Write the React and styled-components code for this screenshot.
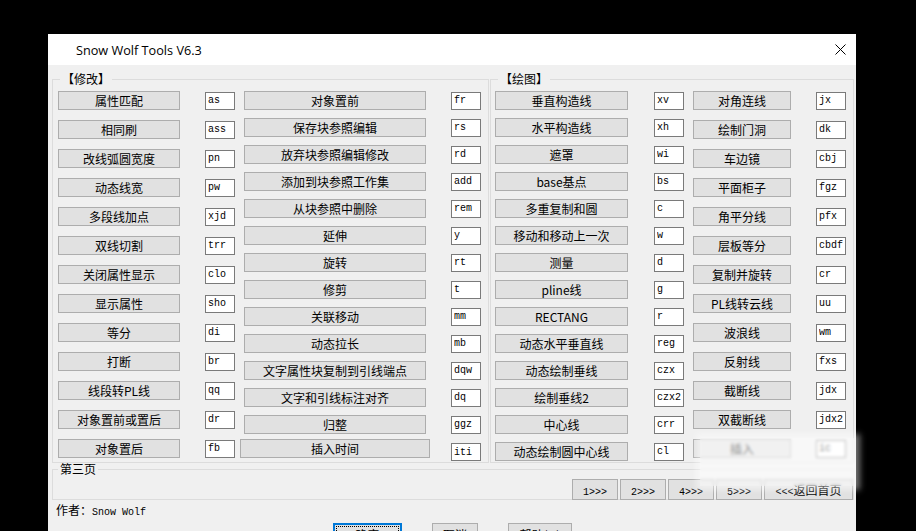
import React from 'react';
import styled, { createGlobalStyle } from 'styled-components';

const GlobalStyle = createGlobalStyle`
  html, body { margin: 0; padding: 0; background: #000; overflow: hidden; }
  * { box-sizing: border-box; }
`;

const Screen = styled.div`
  width: 916px;
  height: 531px;
  overflow: hidden;
  background: #000;
  padding: 34px 0 0 48px;
`;

const Window = styled.div`
  position: relative;
  width: 808px;
  height: 540px;
  background: #f0f0f0;
  display: flex;
  flex-direction: column;
  font-family: "Noto Sans CJK SC", "Noto Sans", sans-serif;
  font-size: 12px;
  color: #000;
`;

const TitleBar = styled.div`
  height: 31px;
  flex: none;
  background: #fff;
  display: flex;
  align-items: center;
  justify-content: space-between;
  padding: 0 10px 0 28px;
  font-family: "Open Sans", "Noto Sans", sans-serif;
  font-size: 12.7px;
`;

const CloseIcon = styled.svg`
  width: 11px;
  height: 11px;
  display: block;
`;

const GroupsRow = styled.div`
  display: flex;
  gap: 1px;
  margin: 6px 2px 0 4px;
  height: 392px;
  flex: none;
`;

const Group = styled.fieldset`
  margin: 0;
  min-width: 0;
  width: ${(p) => p.$w}px;
  height: 100%;
  border: 1px solid #dcdcdc;
  padding: 0 0 0 ${(p) => p.$padL}px;
`;

const Legend = styled.legend`
  margin-left: ${(p) => p.$ml || 0}px;
  padding: 0 2px;
  font-size: 12px;
  line-height: ${(p) => p.$lh || 16}px;
`;

const Columns = styled.div`
  display: flex;
  gap: 9px;
  padding-top: 4px;
`;

const Column = styled.div`
  display: flex;
  flex-direction: column;
  gap: ${(p) => p.$gap}px;
`;

const Row = styled.div`
  display: flex;
  align-items: ${(p) => (p.$last ? 'flex-start' : 'center')};
  gap: ${(p) => p.$gap}px;
  margin-top: ${(p) => (p.$last ? -3 : 0)}px;
`;

const CmdButton = styled.button`
  width: ${(p) => p.$w}px;
  height: 19px;
  flex: none;
  margin: ${(p) => (p.$wide ? '0 -4px 0 -4px' : '0')};
  padding: 0;
  background: #e1e1e1;
  border: 1px solid #adadad;
  border-radius: 0;
  font-family: "Noto Sans CJK SC", sans-serif;
  font-size: 12px;
  line-height: 16px;
  color: #000;
  white-space: nowrap;
  overflow: hidden;
`;

const CodeBox = styled.input`
  width: ${(p) => p.$w}px;
  height: 18px;
  flex: none;
  margin-top: ${(p) => (p.$low ? 4 : 0)}px;
  padding: 0 2px;
  background: #fff;
  border: 1px solid #7a7a7a;
  border-radius: 0;
  font-family: "Liberation Mono", monospace;
  font-size: 10px;
  color: #000;
  outline: none;
`;

const PageGroup = styled.fieldset`
  margin: 0 2px 0 4px;
  min-width: 0;
  height: 37px;
  flex: none;
  border: 1px solid #dcdcdc;
  padding: 0;
`;

const PageButtons = styled.div`
  display: flex;
  justify-content: flex-end;
  gap: 2px;
  padding-top: 4px;
  margin-bottom: -1px;
`;

const PageButton = styled.button`
  width: ${(p) => p.$w}px;
  height: 21px;
  padding: 0;
  background: #e1e1e1;
  border: 1px solid #adadad;
  border-radius: 0;
  font-family: "Noto Sans CJK SC", sans-serif;
  font-size: 12px;
  line-height: 19px;
  color: #000;
`;

const Mono = styled.span`
  font-family: "Liberation Mono", monospace;
  font-size: 10px;
`;

const Author = styled.div`
  margin: 3px 0 0 8px;
  line-height: 14px;
  height: 14px;
`;

const ButtonBar = styled.div`
  display: flex;
  gap: 30px;
  margin-top: 6px;
  padding-left: 285px;
`;

const DialogButton = styled.button`
  width: ${(p) => p.$w}px;
  height: 23px;
  flex: none;
  padding: 0;
  background: #e1e1e1;
  border: 1px solid ${(p) => (p.$primary ? '#0078d7' : '#adadad')};
  box-shadow: ${(p) => (p.$primary ? 'inset 0 0 0 1px #0078d7' : 'none')};
  outline: ${(p) => (p.$primary ? '1px dotted #000' : 'none')};
  outline-offset: -4px;
  border-radius: 0;
  font-family: "Noto Sans CJK SC", sans-serif;
  font-size: 12px;
  line-height: 21px;
  color: #000;
`;

const Watermark = styled.div`
  position: absolute;
  left: 652px;
  top: 404px;
  width: 156px;
  height: 48px;
  background: rgba(255, 255, 255, 0.55);
  backdrop-filter: blur(1.5px);
  box-shadow: 0 0 6px 4px rgba(255, 255, 255, 0.45);
  pointer-events: none;
`;

const colA = [
  ['属性匹配', 'as'], ['相同刷', 'ass'], ['改线弧圆宽度', 'pn'], ['动态线宽', 'pw'],
  ['多段线加点', 'xjd'], ['双线切割', 'trr'], ['关闭属性显示', 'clo'], ['显示属性', 'sho'],
  ['等分', 'di'], ['打断', 'br'], ['线段转PL线', 'qq'], ['对象置前或置后', 'dr'], ['对象置后', 'fb'],
];
const colB = [
  ['对象置前', 'fr'], ['保存块参照编辑', 'rs'], ['放弃块参照编辑修改', 'rd'], ['添加到块参照工作集', 'add'],
  ['从块参照中删除', 'rem'], ['延伸', 'y'], ['旋转', 'rt'], ['修剪', 't'], ['关联移动', 'mm'],
  ['动态拉长', 'mb'], ['文字属性块复制到引线端点', 'dqw'], ['文字和引线标注对齐', 'dq'], ['归整', 'ggz'],
  ['插入时间', 'iti'],
];
const colC = [
  ['垂直构造线', 'xv'], ['水平构造线', 'xh'], ['遮罩', 'wi'], ['base基点', 'bs'], ['多重复制和圆', 'c'],
  ['移动和移动上一次', 'w'], ['测量', 'd'], ['pline线', 'g'], ['RECTANG', 'r'], ['动态水平垂直线', 'reg'],
  ['动态绘制垂线', 'czx'], ['绘制垂线2', 'czx2'], ['中心线', 'crr'], ['动态绘制圆中心线', 'cl'],
];
const colD = [
  ['对角连线', 'jx'], ['绘制门洞', 'dk'], ['车边镜', 'cbj'], ['平面柜子', 'fgz'], ['角平分线', 'pfx'],
  ['层板等分', 'cbdf'], ['复制并旋转', 'cr'], ['PL线转云线', 'uu'], ['波浪线', 'wm'], ['反射线', 'fxs'],
  ['截断线', 'jdx'], ['双截断线', 'jdx2'], ['插入', 'ic'],
];

function CmdColumn({ items, gap, btnW, boxW, rowGap, lastWide }) {
  return (
    <Column $gap={gap}>
      {items.map(([label, code], i) => {
        const special = lastWide && i === items.length - 1;
        return (
          <Row key={code + i} $gap={rowGap} $last={special}>
            <CmdButton $w={special ? btnW + 8 : btnW} $wide={special}>{label}</CmdButton>
            <CodeBox $w={boxW} $low={special} value={code} readOnly spellCheck={false} />
          </Row>
        );
      })}
    </Column>
  );
}

export default function App() {
  return (
    <>
      <GlobalStyle />
      <Screen>
        <Window>
          <TitleBar>
            <span>Snow Wolf Tools V6.3</span>
            <CloseIcon viewBox="0 0 11 11">
              <path d="M0.5 0.5 L10.5 10.5 M10.5 0.5 L0.5 10.5" stroke="#000" strokeWidth="1" fill="none" />
            </CloseIcon>
          </TitleBar>
          <GroupsRow>
            <Group $w={437} $padL={5}>
              <Legend $ml={2}>【修改】</Legend>
              <Columns>
                <CmdColumn items={colA} gap={10} btnW={122} boxW={30} rowGap={25} />
                <CmdColumn items={colB} gap={8} btnW={182} boxW={30} rowGap={25} lastWide />
              </Columns>
            </Group>
            <Group $w={364} $padL={4}>
              <Legend $ml={3}>【绘图】</Legend>
              <Columns>
                <CmdColumn items={colC} gap={8} btnW={133} boxW={30} rowGap={26} />
                <CmdColumn items={colD} gap={10} btnW={98} boxW={30} rowGap={25} />
              </Columns>
            </Group>
          </GroupsRow>
          <PageGroup>
            <Legend $ml={5} $lh={12}>第三页</Legend>
            <PageButtons>
              <PageButton $w={46}><Mono>1&gt;&gt;&gt;</Mono></PageButton>
              <PageButton $w={46}><Mono>2&gt;&gt;&gt;</Mono></PageButton>
              <PageButton $w={46}><Mono>4&gt;&gt;&gt;</Mono></PageButton>
              <PageButton $w={46}><Mono>5&gt;&gt;&gt;</Mono></PageButton>
              <PageButton $w={89}><Mono>&lt;&lt;&lt;</Mono>返回首页</PageButton>
            </PageButtons>
          </PageGroup>
          <Author>作者：<Mono>Snow Wolf</Mono></Author>
          <ButtonBar>
            <DialogButton $w={69} $primary>确定</DialogButton>
            <DialogButton $w={46}>取消</DialogButton>
            <DialogButton $w={64}>帮助(H)</DialogButton>
          </ButtonBar>
          <Watermark />
        </Window>
      </Screen>
    </>
  );
}
